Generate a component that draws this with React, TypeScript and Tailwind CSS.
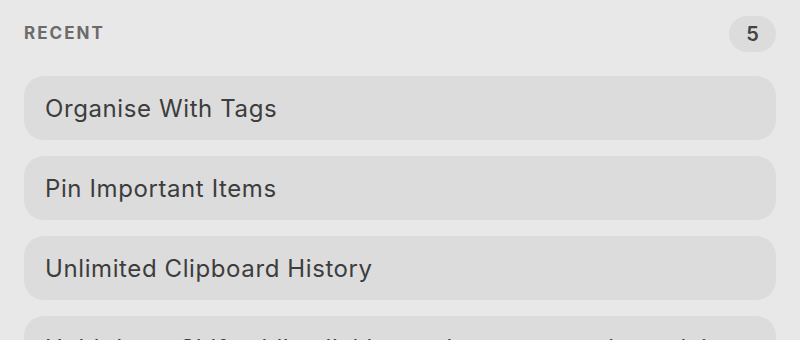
import React from 'react';

const items = [
  'Organise With Tags',
  'Pin Important Items',
  'Unlimited Clipboard History',
  'Hold down Shift while clicking an item to paste it as plain text',
];

export default function App() {
  return (
    <div
      className="min-h-screen bg-[#e8e8e8] px-6 pt-4"
      style={{ fontFamily: 'Inter, "Noto Sans", sans-serif' }}
    >
      <div className="flex items-center justify-between h-9">
        <span className="text-[17px] font-bold tracking-[0.12em] text-[#6b6b6b]">RECENT</span>
        <span className="flex h-9 w-[47px] items-center justify-center rounded-full bg-[#dcdcdc] text-[20px] font-semibold text-[#444]">
          5
        </span>
      </div>
      <div className="mt-6 flex flex-col gap-4">
        {items.map((item) => (
          <div
            key={item}
            className="flex h-16 items-center rounded-[20px] bg-[#dcdcdc] px-[21px] pt-[2px] text-[24px] tracking-[0.025em] text-[#3d3d3d] whitespace-nowrap overflow-hidden"
          >
            {item}
          </div>
        ))}
      </div>
    </div>
  );
}
